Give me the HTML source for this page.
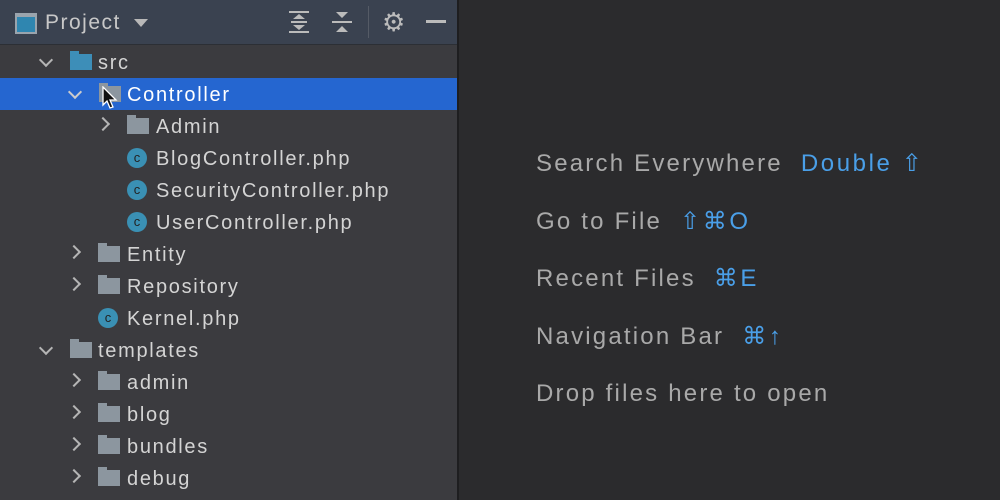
<!DOCTYPE html><html><head><style>
body{margin:0;width:1000px;height:500px;overflow:hidden;background:#2b2b2d;font-family:"Liberation Sans",sans-serif;position:relative}
#left{position:absolute;left:0;top:0;width:457px;height:500px;background:#3b3b3f;border-right:2px solid #1e1e20}
#hdr{position:absolute;left:0;top:0;width:457px;height:44px;background:#3a4250;border-bottom:1px solid #2c2f35}
.row{position:absolute;left:0;width:457px;height:32px;color:#d4d4d4;font-size:20px;letter-spacing:1.7px}
.row span.t{position:absolute;top:6px}
.sel{background:#2566d0;color:#fff}
.chev{position:absolute;top:9px;width:8px;height:8px;border-right:2px solid #b5b5b5;border-bottom:2px solid #b5b5b5}
.down{transform:rotate(45deg)}
.right{transform:rotate(-45deg)}
.fold{position:absolute;top:8px;width:22px;height:16px;background:#8c969f}
.fold:before{content:"";position:absolute;left:0;top:-3px;width:9px;height:4px;background:inherit}
.blue{background:#3d8eb8}
.cls{position:absolute;top:6px;width:20px;height:20px;border-radius:50%;background:#3a90b4;color:#222;font-size:13px;text-align:center;line-height:19px;font-style:normal;letter-spacing:0}
.lab{position:absolute;left:536px;font-size:24px;color:#a9a9a9;letter-spacing:2.2px}
.lab b{font-weight:normal;color:#4a9fe8;margin-left:18px;letter-spacing:2.6px}
</style></head><body>
<div id="left">
<div id="hdr">
<div style="position:absolute;left:15px;top:13px;width:18px;height:15px;border:2px solid #9aa4ad;border-top-width:4px;background:#2f86b0"></div>
<div style="position:absolute;left:45px;top:11px;font-size:21px;color:#c8c8c8;letter-spacing:1.5px">Project</div>
<div style="position:absolute;left:134px;top:19px;border-left:7px solid transparent;border-right:7px solid transparent;border-top:8px solid #b8b8b8"></div>
<svg style="position:absolute;left:288px;top:10px" width="22" height="24" viewBox="0 0 22 24" fill="#bbb"><rect x="1" y="1" width="20" height="2"/><rect x="1" y="21" width="20" height="2"/><path d="M5 9l6-5 6 5zM5 15l6 5 6-5z"/><rect x="3" y="11" width="16" height="2"/></svg>
<svg style="position:absolute;left:331px;top:10px" width="22" height="24" viewBox="0 0 22 24" fill="#bbb"><rect x="1" y="11" width="20" height="2"/><path d="M5 2l6 6 6-6zM5 22l6-6 6 6z"/></svg>
<div style="position:absolute;left:368px;top:6px;width:1px;height:32px;background:#555b66"></div>
<div style="position:absolute;left:382px;top:7px;font-size:26px;color:#bbb">⚙</div>
<div style="position:absolute;left:426px;top:20px;width:20px;height:3px;background:#bbb"></div>
</div>
<div class="row" style="top:46px"><i class="chev down" style="left:41px"></i><i class="fold blue" style="left:70px"></i><span class="t" style="left:98px">src</span></div>
<div class="row sel" style="top:78px"><i class="chev down" style="left:70px;border-color:#ccc"></i><i class="fold" style="left:99px"></i><span class="t" style="left:127px">Controller</span>
<svg style="position:absolute;left:102px;top:8px" width="16" height="24" viewBox="0 0 16 24"><path d="M1 1v18l4-4 3 7 3-1-3-7h6z" fill="#111" stroke="#fff" stroke-width="1.3"/></svg></div>
<div class="row" style="top:110px"><i class="chev right" style="left:98px"></i><i class="fold" style="left:127px"></i><span class="t" style="left:156px">Admin</span></div>
<div class="row" style="top:142px"><i class="cls" style="left:127px">c</i><span class="t" style="left:156px">BlogController.php</span></div>
<div class="row" style="top:174px"><i class="cls" style="left:127px">c</i><span class="t" style="left:156px">SecurityController.php</span></div>
<div class="row" style="top:206px"><i class="cls" style="left:127px">c</i><span class="t" style="left:156px">UserController.php</span></div>
<div class="row" style="top:238px"><i class="chev right" style="left:69px"></i><i class="fold" style="left:98px"></i><span class="t" style="left:127px">Entity</span></div>
<div class="row" style="top:270px"><i class="chev right" style="left:69px"></i><i class="fold" style="left:98px"></i><span class="t" style="left:127px">Repository</span></div>
<div class="row" style="top:302px"><i class="cls" style="left:98px">c</i><span class="t" style="left:127px">Kernel.php</span></div>
<div class="row" style="top:334px"><i class="chev down" style="left:41px"></i><i class="fold" style="left:70px"></i><span class="t" style="left:98px">templates</span></div>
<div class="row" style="top:366px"><i class="chev right" style="left:69px"></i><i class="fold" style="left:98px"></i><span class="t" style="left:127px">admin</span></div>
<div class="row" style="top:398px"><i class="chev right" style="left:69px"></i><i class="fold" style="left:98px"></i><span class="t" style="left:127px">blog</span></div>
<div class="row" style="top:430px"><i class="chev right" style="left:69px"></i><i class="fold" style="left:98px"></i><span class="t" style="left:127px">bundles</span></div>
<div class="row" style="top:462px"><i class="chev right" style="left:69px"></i><i class="fold" style="left:98px"></i><span class="t" style="left:127px">debug</span></div>
</div>
<div class="lab" style="top:149px">Search Everywhere<b>Double ⇧</b></div>
<div class="lab" style="top:207px">Go to File<b>⇧⌘O</b></div>
<div class="lab" style="top:264px">Recent Files<b>⌘E</b></div>
<div class="lab" style="top:322px">Navigation Bar<b>⌘↑</b></div>
<div class="lab" style="top:380px">Drop files here to open</div>
</body></html>
